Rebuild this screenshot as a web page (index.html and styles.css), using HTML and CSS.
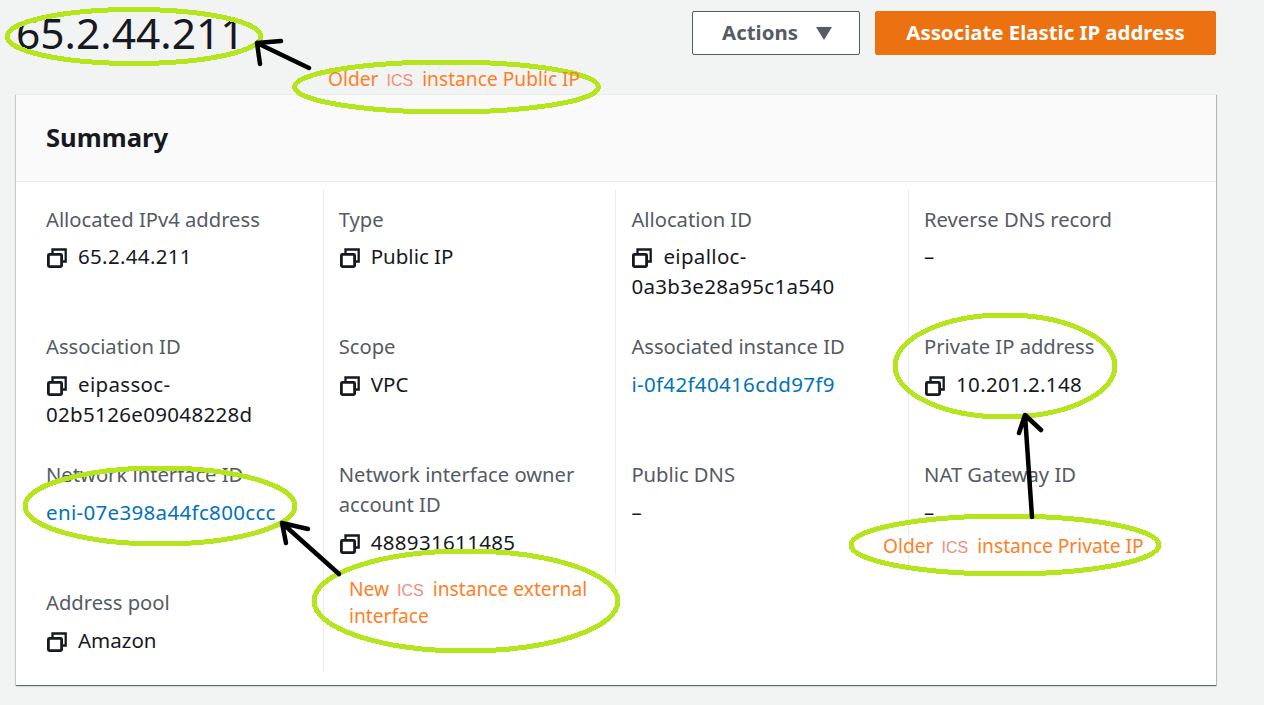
FILE: index.html
```html
<!DOCTYPE html>
<html lang="en">
<head>
<meta charset="utf-8">
<title>65.2.44.211</title>
<link rel="stylesheet" href="styles.css">
</head>
<body>
<svg width="0" height="0" class="defs">
  <symbol id="copy" viewBox="0 0 20 20">
    <path d="M5.5 6V1.5H18.7V13.5H14.5" fill="none" stroke="#16191f" stroke-width="2.3"/>
    <rect x="1.4" y="6.4" width="13.2" height="12.2" rx="1" fill="none" stroke="#16191f" stroke-width="2.8"/>
  </symbol>
</svg>
<div class="page">
  <header class="top">
    <h1 class="title">65.2.44.211</h1>
    <div class="actions">
      <button class="btn btn-normal">Actions <span class="caret"></span></button>
      <button class="btn btn-primary">Associate Elastic IP address</button>
    </div>
  </header>
  <section class="card">
    <div class="card-head"><h2>Summary</h2></div>
    <div class="grid">
      <div class="cell"><div class="label">Allocated IPv4 address</div><div class="value id"><svg class="icon"><use href="#copy"/></svg>65.2.44.211</div></div>
      <div class="cell"><div class="label">Type</div><div class="value"><svg class="icon"><use href="#copy"/></svg>Public IP</div></div>
      <div class="cell"><div class="label">Allocation ID</div><div class="value id"><svg class="icon"><use href="#copy"/></svg>eipalloc-0a3b3e28a95c1a540</div></div>
      <div class="cell"><div class="label">Reverse DNS record</div><div class="value">–</div></div>

      <div class="cell"><div class="label">Association ID</div><div class="value id"><svg class="icon"><use href="#copy"/></svg>eipassoc-02b5126e09048228d</div></div>
      <div class="cell"><div class="label">Scope</div><div class="value"><svg class="icon"><use href="#copy"/></svg>VPC</div></div>
      <div class="cell"><div class="label">Associated instance ID</div><div class="value id"><a class="link">i-0f42f40416cdd97f9</a></div></div>
      <div class="cell"><div class="label">Private IP address</div><div class="value id"><svg class="icon"><use href="#copy"/></svg>10.201.2.148</div></div>

      <div class="cell"><div class="label">Network interface ID</div><div class="value id"><a class="link">eni-07e398a44fc800ccc</a></div></div>
      <div class="cell"><div class="label">Network interface owner account ID</div><div class="value id"><svg class="icon"><use href="#copy"/></svg>488931611485</div></div>
      <div class="cell"><div class="label">Public DNS</div><div class="value">–</div></div>
      <div class="cell"><div class="label">NAT Gateway ID</div><div class="value">–</div></div>

      <div class="cell"><div class="label">Address pool</div><div class="value"><svg class="icon"><use href="#copy"/></svg>Amazon</div></div>
      <div class="cell"></div>
    </div>
  </section>
</div>

<svg class="marks" width="1264" height="705" viewBox="0 0 1264 705">
  <g class="rings">
    <ellipse cx="134" cy="36.5" rx="127" ry="27"/>
    <ellipse cx="446.5" cy="87" rx="152" ry="25"/>
    <ellipse cx="160" cy="506" rx="135" ry="38"/>
    <ellipse cx="466" cy="601" rx="152" ry="50"/>
    <ellipse cx="1005" cy="366" rx="110" ry="51"/>
    <ellipse cx="1005" cy="545" rx="154" ry="29"/>
  </g>
  <g class="arrows">
    <path d="M309 68L257 43M281 41L257 43L260 64"/>
    <path d="M339 574L282 523M308 529L282 523L286 543"/>
    <path d="M1032 517L1025 415M1019 433L1025 415L1041 430"/>
  </g>
</svg>
<div class="note note-public">Older <span class="ics">ICS</span> instance Public IP</div>
<div class="note note-new">New <span class="ics">ICS</span> instance external interface</div>
<div class="note note-private">Older <span class="ics">ICS</span> instance Private IP</div>
</body>
</html>
```
FILE: styles.css
```css
* { box-sizing: border-box; }
html, body { margin: 0; height: 705px; overflow: hidden; }
body {
  background: #f2f3f3;
  color: #16191f;
  font-family: "Noto Sans", "Open Sans", sans-serif;
  position: relative;
}
.defs { position: absolute; }
.page { padding: 0 48px 0 16px; }
.top {
  display: flex;
  justify-content: space-between;
  align-items: flex-start;
  height: 94px;
  padding-top: 11px;
}
.title {
  margin: -3px 0 0 0;
  font-size: 42.5px;
  line-height: 50px;
  font-weight: 400;
}
.actions { display: flex; gap: 15px; }
.btn {
  height: 44px;
  border-radius: 2px;
  font-family: inherit;
  font-size: 20.4px;
  font-weight: 700;
  line-height: 24px;
  padding: 0 0 2px;
}
.btn-normal {
  width: 168px;
  background: #fff;
  border: 1px solid #545b64;
  color: #545b64;
  display: flex;
  align-items: center;
  justify-content: center;
  gap: 18px;
  padding-left: 2px;
}
.caret {
  width: 0;
  height: 0;
  border-left: 8px solid transparent;
  border-right: 8px solid transparent;
  border-top: 13px solid #545b64;
  margin-top: 2px;
}
.btn-primary {
  width: 341px;
  background: #ec7211;
  border: 1px solid #ec7211;
  color: #fff;
}
.card {
  height: 591px;
  background: #fff;
  box-shadow: 0 1px 1px 0 rgba(0, 28, 36, .45), 1px 1px 1px 0 rgba(0, 28, 36, .2), -1px 1px 1px 0 rgba(0, 28, 36, .12);
}
.card-head {
  height: 88px;
  background: #fafafa;
  border-top: 1px solid #eaeded;
  border-bottom: 1px solid #eaeded;
  padding: 28px 30px 0;
}
.card-head h2 {
  margin: 0;
  font-size: 25.6px;
  line-height: 30px;
  font-weight: 700;
}
.grid {
  display: grid;
  grid-template-columns: repeat(4, 292.7px);
  padding: 8px 0 0 14px;
}
.cell {
  padding: 13.6px 16px 16.4px 15px;
  border-left: 1px solid #eaeded;
  font-size: 20.2px;
  line-height: 30px;
}
.cell:nth-child(4n + 1) {
  border-left: 0;
  padding-left: 16px;
}
.label { color: #545b64; margin-bottom: 7.4px; }
.value { color: #16191f; overflow-wrap: anywhere; font-size: 20.5px; padding-bottom: .5px; }
.id { letter-spacing: .33px; }
.icon {
  width: 20px;
  height: 20px;
  margin: 0 11px 0 1px;
  vertical-align: -4px;
}
.link { color: #0073bb; }

.marks { position: absolute; left: 0; top: 0; pointer-events: none; }
.rings ellipse { fill: none; stroke: #b5e61d; stroke-width: 5; shape-rendering: crispEdges; }
.arrows path {
  fill: none;
  stroke: #000;
  stroke-width: 4.5;
  stroke-linecap: round;
  stroke-linejoin: round;
}
.note {
  position: absolute;
  color: #ff7f27;
  font-size: 19.2px;
  line-height: 26px;
}
.ics {
  color: #f68c7c;
  font-family: "Liberation Sans", sans-serif;
  font-size: 16px;
  margin: 0 4px 0 3px;
}
.note-public { left: 328px; top: 66px; white-space: nowrap; }
.note-new { left: 349px; top: 576px; width: 250px; line-height: 25px; }
.note-private { left: 883px; top: 533px; white-space: nowrap; }
```
